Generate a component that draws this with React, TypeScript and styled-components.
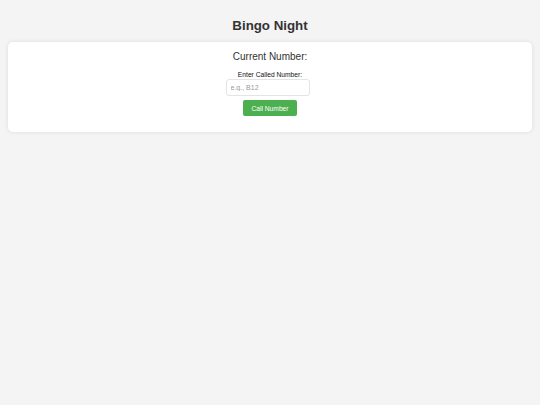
import React from 'react';
import styled, { createGlobalStyle } from 'styled-components';

const GlobalStyle = createGlobalStyle`
  html, body {
    margin: 0;
    padding: 0;
    background: #f4f4f4;
    font-family: "Liberation Sans", Arial, sans-serif;
  }
`

const Page = styled.div`
  padding: 0 8px;
  min-height: 405px;
  box-sizing: border-box;
`

const Title = styled.h1`
  margin: 18px 0 9px;
  font-size: 13.3px;
  line-height: 15px;
  font-weight: bold;
  color: #333;
  text-align: center;
`

const Card = styled.div`
  background: #fff;
  border-radius: 5px;
  box-shadow: 0 0 4px rgba(0, 0, 0, 0.1);
  padding: 9px 8px 16px;
  display: flex;
  flex-direction: column;
  align-items: center;
`

const CurrentNumber = styled.h2`
  margin: 0;
  font-size: 10px;
  line-height: 11.5px;
  font-weight: normal;
  color: #333;
`

const Form = styled.div`
  margin-top: 8px;
  display: flex;
  flex-direction: column;
  align-items: center;
`

const Label = styled.label`
  font-size: 6.7px;
  line-height: 7.7px;
  color: #111;
`

const NumberInput = styled.input`
  margin: 1px 5px 0 0;
  width: 84px;
  height: 17px;
  box-sizing: border-box;
  border: 1px solid #e4e4e4;
  border-radius: 3px;
  padding: 0 4px;
  font-family: inherit;
  font-size: 7px;
  color: #333;
  outline: none;
  &::placeholder {
    color: #999;
  }
`

const CallButton = styled.button`
  margin-top: 4px;
  height: 16px;
  padding: 0 8px;
  border: none;
  border-radius: 2px;
  background: #4caf50;
  color: #fff;
  font-family: inherit;
  font-size: 6.7px;
  cursor: pointer;
`

export default function App() {
  return (
    <>
      <GlobalStyle />
      <Page>
        <Title>Bingo Night</Title>
        <Card>
          <CurrentNumber>Current Number:</CurrentNumber>
          <Form>
            <Label htmlFor="called">Enter Called Number:</Label>
            <NumberInput id="called" placeholder="e.g., B12" />
            <CallButton>Call Number</CallButton>
          </Form>
        </Card>
      </Page>
    </>
  )
}
